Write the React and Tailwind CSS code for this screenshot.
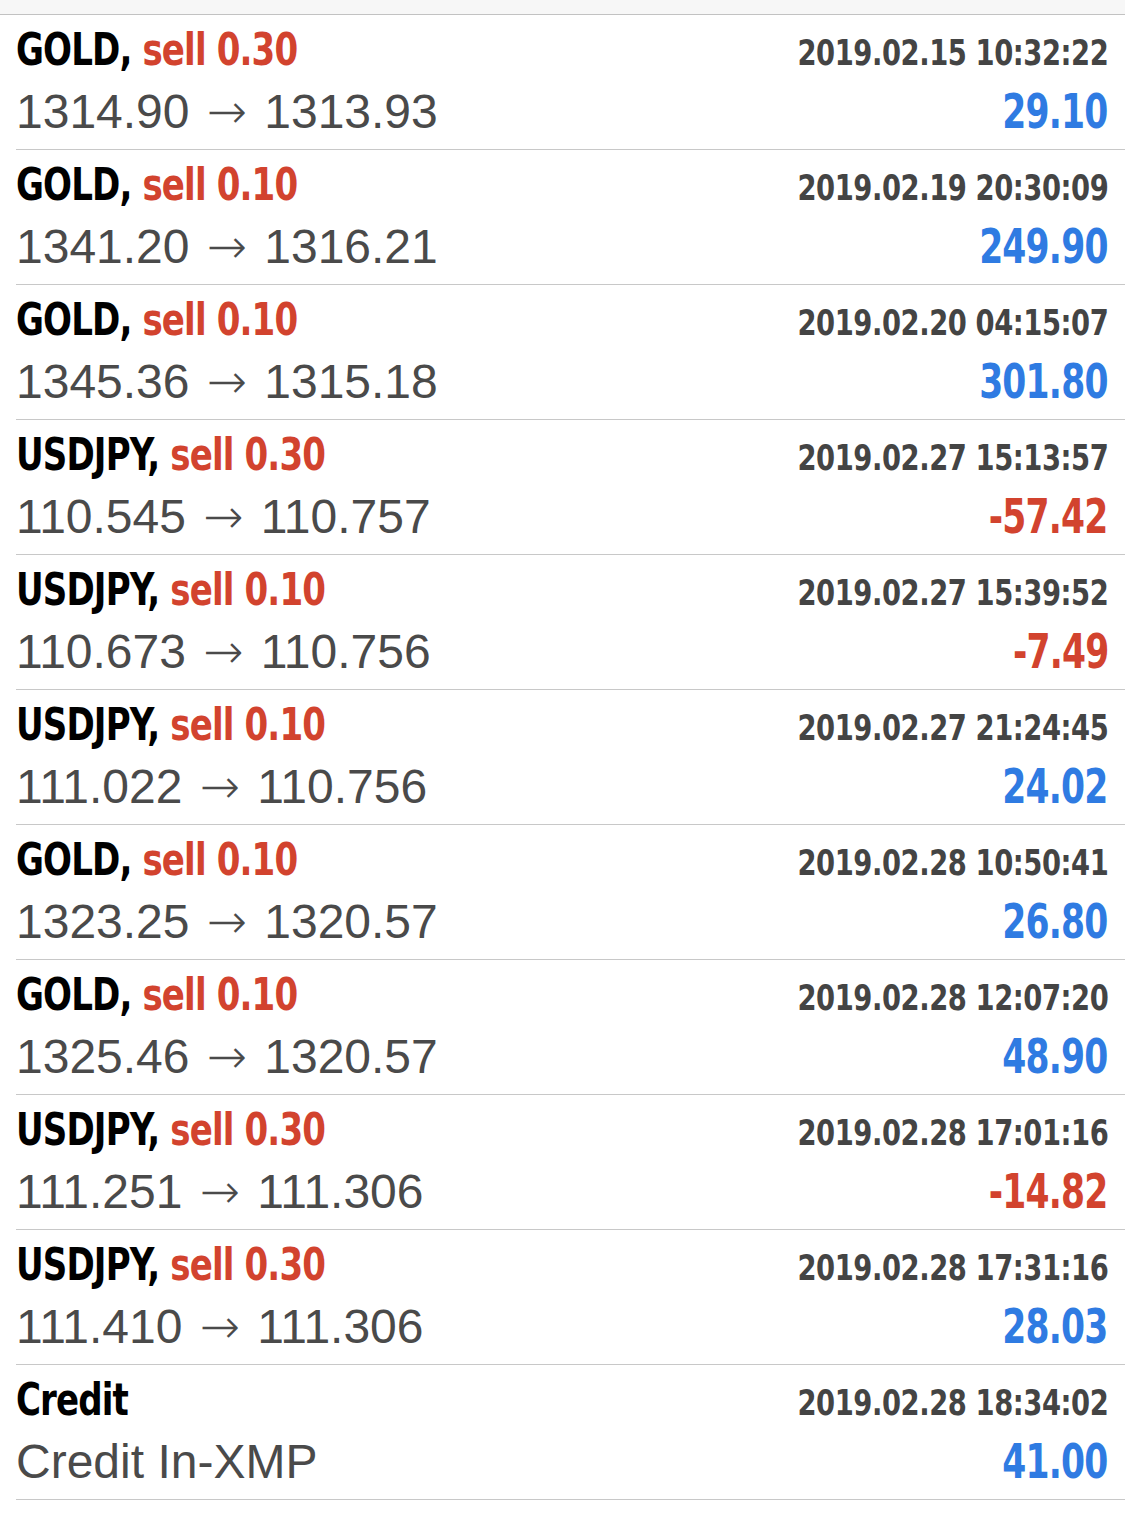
const trades = [
  { symbol: "GOLD", type: "sell 0.30", time: "2019.02.15 10:32:22", from: "1314.90", to: "1313.93", profit: "29.10" },
  { symbol: "GOLD", type: "sell 0.10", time: "2019.02.19 20:30:09", from: "1341.20", to: "1316.21", profit: "249.90" },
  { symbol: "GOLD", type: "sell 0.10", time: "2019.02.20 04:15:07", from: "1345.36", to: "1315.18", profit: "301.80" },
  { symbol: "USDJPY", type: "sell 0.30", time: "2019.02.27 15:13:57", from: "110.545", to: "110.757", profit: "-57.42" },
  { symbol: "USDJPY", type: "sell 0.10", time: "2019.02.27 15:39:52", from: "110.673", to: "110.756", profit: "-7.49" },
  { symbol: "USDJPY", type: "sell 0.10", time: "2019.02.27 21:24:45", from: "111.022", to: "110.756", profit: "24.02" },
  { symbol: "GOLD", type: "sell 0.10", time: "2019.02.28 10:50:41", from: "1323.25", to: "1320.57", profit: "26.80" },
  { symbol: "GOLD", type: "sell 0.10", time: "2019.02.28 12:07:20", from: "1325.46", to: "1320.57", profit: "48.90" },
  { symbol: "USDJPY", type: "sell 0.30", time: "2019.02.28 17:01:16", from: "111.251", to: "111.306", profit: "-14.82" },
  { symbol: "USDJPY", type: "sell 0.30", time: "2019.02.28 17:31:16", from: "111.410", to: "111.306", profit: "28.03" },
  { symbol: "Credit", type: null, time: "2019.02.28 18:34:02", comment: "Credit In-XMP", profit: "41.00" },
];

// no Helvetica Condensed here, squeeze DejaVu Condensed a bit more
const narrow = "font-['DejaVu_Sans',sans-serif] font-stretch-condensed font-bold";

function TradeRow({ trade }) {
  const negative = trade.profit.startsWith("-");
  return (
    <div className="h-[135px] border-b border-[#c8c8c8] pr-[17px] flex flex-col">
      <div className="flex items-baseline justify-between pt-[13px] h-[57px]">
        <p className={`${narrow} origin-left scale-x-[0.86] text-[44px] leading-[44px] tracking-[-1px] text-black`}>
          {trade.symbol}
          {trade.type && (
            <>
              , <span className="text-[#d2432e]">{trade.type}</span>
            </>
          )}
        </p>
        <p className={`${narrow} origin-right scale-x-[0.87] text-[35px] leading-[44px] tracking-[-0.5px] text-[#444444]`}>
          {trade.time}
        </p>
      </div>
      <div className="flex items-baseline justify-between pt-[15px]">
        <p className="font-['Liberation_Sans',sans-serif] text-[48px] leading-[48px] text-[#4a4a4a]">
          {trade.comment ?? (
            <>
              {trade.from}
              <span className="font-['DejaVu_Sans',sans-serif] font-extralight mx-[2px]"> → </span>
              {trade.to}
            </>
          )}
        </p>
        <p
          className={`${narrow} origin-right scale-x-[0.8] text-[48px] leading-[48px] tracking-[-1px] ${
            negative ? "text-[#d2432e]" : "text-[#2f7be2]"
          }`}>
          {trade.profit}
        </p>
      </div>
    </div>
  );
}

function App() {
  return (
    <div className="w-[1125px] h-[1517px] bg-white overflow-hidden">
      <div className="h-[15px] bg-[#f7f7f7] border-b border-[#c2c2c2]" />
      <div className="pl-4">
        {trades.map((trade, i) => (
          <TradeRow key={i} trade={trade} />
        ))}
      </div>
    </div>
  );
}

export default App;
